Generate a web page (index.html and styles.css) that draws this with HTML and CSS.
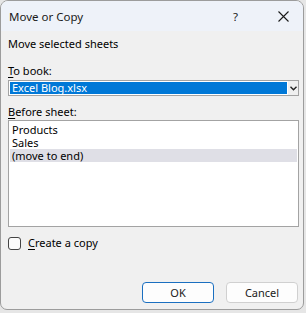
FILE: index.html
```html
<!DOCTYPE html>
<html>
<head>
<meta charset="utf-8">
<link rel="stylesheet" href="styles.css">
</head>
<body>
<div class="dialog">
  <div class="titlebar">
    <span class="title">Move or Copy</span>
    <span class="help">?</span>
    <svg class="close" width="11" height="11" viewBox="0 0 11 11"><path d="M0.5 0.5 L10.5 10.5 M10.5 0.5 L0.5 10.5" stroke="#1a1a1a" stroke-width="1.1" fill="none"/></svg>
  </div>
  <div class="content">
    <div class="caption">Move selected sheets</div>
    <div class="label"><u>T</u>o book:</div>
    <div class="select">
      <div class="select-value">Excel Blog.xlsx</div>
      <div class="select-btn"><svg width="7" height="5" viewBox="0 0 7 5"><path d="M0.5 0.8 L3.5 3.8 L6.5 0.8" stroke="#222" stroke-width="1.4" fill="none"/></svg></div>
    </div>
    <div class="label label2"><u>B</u>efore sheet:</div>
    <div class="listbox">
      <div class="item">Products</div>
      <div class="item">Sales</div>
      <div class="item selected">(move to end)</div>
    </div>
    <div class="check-row">
      <span class="checkbox"></span>
      <span class="check-label"><u>C</u>reate a copy</span>
    </div>
    <div class="buttons">
      <button class="btn primary">OK</button>
      <button class="btn">Cancel</button>
    </div>
  </div>
</div>
</body>
</html>
```
FILE: styles.css
```css
html, body {
  margin: 0;
  padding: 0;
}
body {
  background: #e6e6e6;
  width: 306px;
  height: 313px;
  overflow: hidden;
  font-family: "Noto Sans", "Open Sans", sans-serif;
  font-size: 11px;
  color: #000;
}
.dialog {
  box-sizing: border-box;
  width: 304px;
  height: 310px;
  border: 1px solid #9c9c9c;
  border-radius: 8px 8px 7px 7px;
  background: #f0f0f0;
  overflow: hidden;
  display: flex;
  flex-direction: column;
}
.titlebar {
  height: 30px;
  background: #eef2f9;
  display: flex;
  align-items: center;
  padding-left: 8px;
  flex-shrink: 0;
  font-size: 11.5px;
}
.title {
  flex: 1;
  color: #1a1a1a;
}
.help {
  margin-right: 40px;
  color: #1a1a1a;
}
.close {
  margin-right: 14px;
}
.content {
  padding: 0 4px 0 7px;
  display: flex;
  flex-direction: column;
  flex: 1;
}
.caption {
  margin-top: 5px;
  line-height: 16px;
}
.label {
  margin-top: 11px;
  line-height: 16px;
}
.label2 {
  margin-top: 8px;
}
u {
  text-underline-offset: 2px;
}
.select {
  margin-top: 1px;
  height: 14px;
  border: 1px solid #a3a3a3;
  background: #fff;
  display: flex;
  width: 289px;
}
.select-value {
  flex: 1;
  background: #0078d7;
  color: #fff;
  line-height: 12px;
  padding-left: 2px;
  margin: 1px;
}
.select-btn {
  width: 10px;
  display: flex;
  align-items: center;
  justify-content: center;
  background: #f0f0f0;
}
.listbox {
  margin-top: 0;
  width: 289px;
  height: 103px;
  border: 1px solid #a3a3a3;
  background: #fff;
  padding-top: 2px;
  box-sizing: content-box;
}
.item {
  line-height: 13px;
  height: 13px;
  padding-left: 2px;
  margin: 0 1px;
}
.item.selected {
  background: #dfdfe6;
}
.check-row {
  margin-top: 8px;
  display: flex;
  align-items: center;
  gap: 7px;
  line-height: 16px;
}
.checkbox {
  box-sizing: border-box;
  width: 13px;
  height: 13px;
  border: 1px solid #444;
  border-radius: 3px;
  background: #fbfbfb;
}
.buttons {
  margin-top: auto;
  margin-bottom: 6px;
  display: flex;
  justify-content: flex-end;
  gap: 12px;
  padding-right: 1px;
}
.btn {
  box-sizing: border-box;
  width: 72px;
  height: 21px;
  border: 1px solid #d0d0d0;
  border-radius: 4px;
  background: #fdfdfd;
  font-family: inherit;
  font-size: 11px;
  color: #1a1a1a;
  padding: 0;
}
.btn.primary {
  border-color: #1a6fc0;
}
```
